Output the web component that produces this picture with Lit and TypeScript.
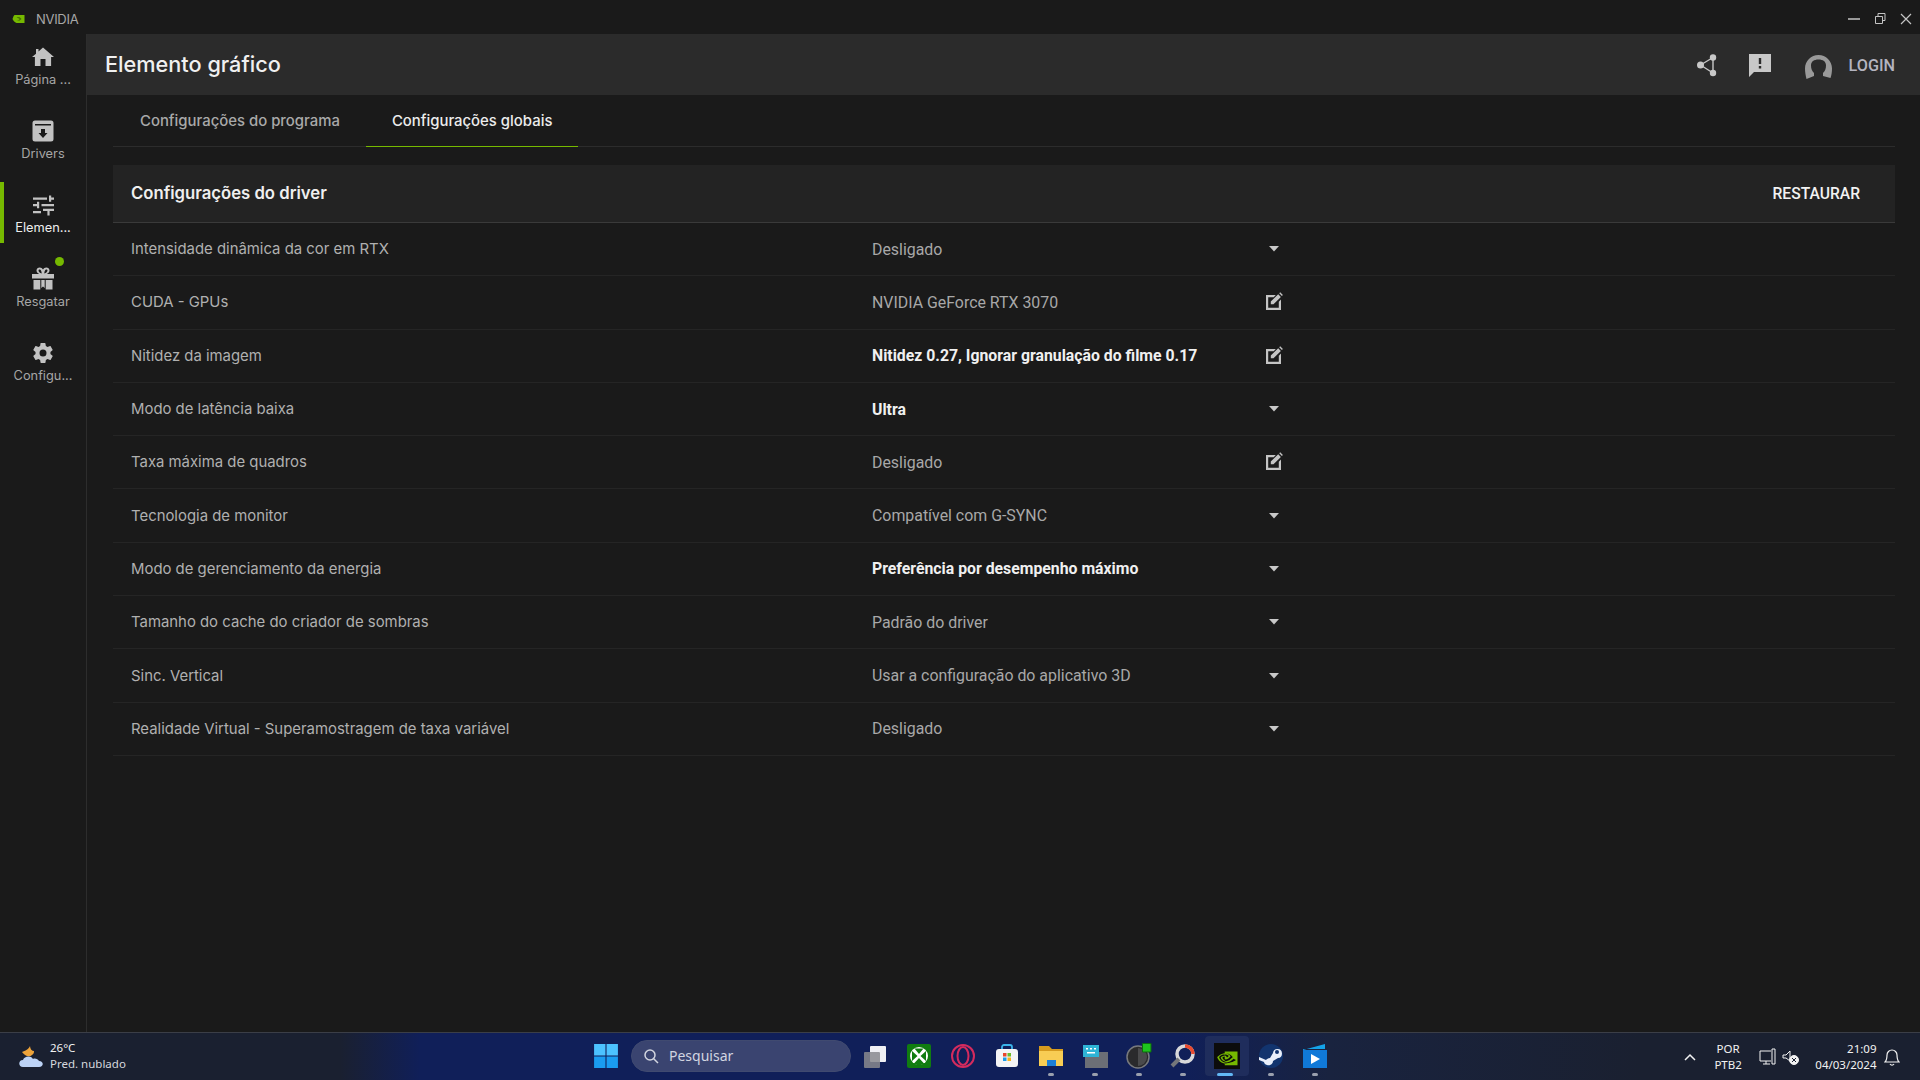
import { LitElement, html, svg, css } from 'lit';
import { customElement } from 'lit/decorators.js';

type Row = { label: string; value: string; strong?: boolean; edit?: boolean };

const ROWS: Row[] = [
  { label: 'Intensidade dinâmica da cor em RTX', value: 'Desligado' },
  { label: 'CUDA - GPUs', value: 'NVIDIA GeForce RTX 3070', edit: true },
  { label: 'Nitidez da imagem', value: 'Nitidez 0.27, Ignorar granulação do filme 0.17', strong: true, edit: true },
  { label: 'Modo de latência baixa', value: 'Ultra', strong: true },
  { label: 'Taxa máxima de quadros', value: 'Desligado', edit: true },
  { label: 'Tecnologia de monitor', value: 'Compatível com G-SYNC' },
  { label: 'Modo de gerenciamento da energia', value: 'Preferência por desempenho máximo', strong: true },
  { label: 'Tamanho do cache do criador de sombras', value: 'Padrão do driver' },
  { label: 'Sinc. Vertical', value: 'Usar a configuração do aplicativo 3D' },
  { label: 'Realidade Virtual - Superamostragem de taxa variável', value: 'Desligado' },
];

const ICONS = {
  home: svg`<path d="M9.500 21v-7h5v7h5.600v-9H23L12 2.500 7.500 6.500V4H5v4.700L1 12h2.900v9z"/>`,
  drivers: svg`<path fill-rule="evenodd" d="M4 1.500h16a2.500 2.500 0 0 1 2.500 2.500v16a2.500 2.500 0 0 1-2.500 2.500H4A2.500 2.500 0 0 1 1.500 20V4A2.500 2.500 0 0 1 4 1.500zM4 5v1.500h16V5zM10 10v4H7.500l4.500 5 4.500-5H14v-4z"/>`,
  tune: svg`<path d="M2 4.500h14v2.200H2zM18 2.500h2.200v2h2.800v2.200h-2.800v2H18zM2 11h4v-2.200h2.200v6.400H6V13.200H2zM10.500 11H23v2.200H10.500zM2 18h8v2.200H2zM12 15.800h11V18h-4.400v4.500h-2.200V18H12z"/>`,
  gift: svg`<path fill-rule="evenodd" d="M1 7h7.200C6.500 6.300 5.500 5 5.500 3.600 5.500 1.800 7 .5 8.700.5c1.400 0 2.600.8 3.300 2 .7-1.200 1.900-2 3.300-2 1.700 0 3.200 1.300 3.200 3.100 0 1.400-1 2.700-2.700 3.400H23v4.500H1zM8.700 2.500c-.7 0-1.200.5-1.200 1.100 0 .9 1.200 2.600 3.200 3 0-2-.9-4.100-2-4.100zm6.600 0c-1.100 0-2 2.100-2 4.100 2-.4 3.200-2.100 3.200-3 0-.6-.5-1.100-1.200-1.100zM2.500 13h6.800v9.500H2.500zM14.700 13h6.800v9.500h-6.800zM10.300 13h3.400v8l-1.700-1.500-1.700 1.500z"/>`,
  gear: svg`<path d="M19.400 13c.04-.33.1-.66.1-1s-.05-.67-.1-1l2.100-1.650c.2-.15.24-.42.12-.64l-2-3.460c-.12-.22-.39-.3-.61-.22l-2.490 1c-.52-.4-1.080-.73-1.690-.98l-.38-2.650A.49.49 0 0 0 14 2h-4c-.25 0-.46.18-.49.42l-.38 2.650c-.61.25-1.170.59-1.690.98l-2.490-1c-.23-.09-.49 0-.61.22l-2 3.460c-.13.220-.07.490.12.640L4.570 11c-.04.33-.07.66-.07 1s.03.67.07 1l-2.110 1.650c-.19.15-.25.42-.12.640l2 3.460c.12.220.39.300.61.220l2.490-1c.52.400 1.080.730 1.690.980l.38 2.650c.03.240.24.420.49.420h4c.25 0 .46-.18.49-.42l.38-2.650c.61-.25 1.170-.59 1.690-.98l2.490 1c.23.090.49 0 .61-.22l2-3.460c.12-.22.070-.49-.12-.64zM12 15.500a3.500 3.500 0 1 1 0-7 3.500 3.500 0 0 1 0 7z"/>`,
};

const NAV = [
  { label: 'Página ...', icon: ICONS.home },
  { label: 'Drivers', icon: ICONS.drivers },
  { label: 'Elemen...', icon: ICONS.tune, active: true },
  { label: 'Resgatar', icon: ICONS.gift, dot: true },
  { label: 'Configu...', icon: ICONS.gear },
];

const nvidiaEye = svg`<path d="M9.200 8.900V7.400h.45c4.100-.13 6.800 3.500 6.800 3.500s-2.900 4-6 4c-.45 0-.85-.07-1.250-.2V10c1.600.2 1.900.9 2.900 2.500l2.100-1.800s-1.500-2-4.100-2c-.3 0-.55.020-.9.200zm0-3.700v2.200h.45c5.700-.2 9.400 4.600 9.400 4.600s-4.300 5.200-8.700 5.200c-.4 0-.77-.04-1.150-.1v1.400c.3.040.64.060.96.060 4.100 0 7.100-2.100 10-4.600.48.380 2.450 1.300 2.850 1.700-2.730 2.300-9.100 4.100-12.700 4.100-.36 0-.7-.02-1.060-.06V22h15.700V5.200zm0 10.700v1.200c-3.900-.7-5-4.700-5-4.700s1.900-2.100 5-2.400v1.300c-1.600-.2-2.900 1.300-2.900 1.300s.7 2.600 2.900 3.400zM2.300 12.300s2.300-3.400 6.900-3.700V7.400C4.100 7.800 0 12.100 0 12.100s2.300 7.100 9.200 7.700v-1.300c-5-.6-6.900-6.200-6.900-6.200z"/>`;

const editIcon = html`<svg class="edit" viewBox="0 0 18 18"><path d="M1 3h9.800L8.700 5.200H3.200v10.600h10.600V9.800L16 7.600V18H1z"/><path d="M5.800 9.600 13.200 2.200l2.700 2.700-7.400 7.400H5.800zM14.200 1.200 15.200.2l2.700 2.700-1 1z"/></svg>`;

const caret = html`<svg class="caret" viewBox="0 0 10 6"><path d="M0 0h10L5 5.500z"/></svg>`;

@customElement('app-root')
export class AppRoot extends LitElement {
  static styles = css`
    :host {
      display: flex;
      flex-direction: column;
      width: 1920px;
      height: 1080px;
      overflow: hidden;
      background: #1a1a1a;
      font-family: Inter, 'Noto Sans', sans-serif;
      color: #b4b4b4;
    }
    svg { display: block; }
    svg:not([fill]) { fill: currentColor; }
    .titlebar {
      height: 34px;
      flex: none;
      box-sizing: border-box;
      padding: 3px 0 0 12px;
      display: flex;
      align-items: center;
      font-size: 13px;
      letter-spacing: -0.3px;
      color: #a8a8a8;
    }
    .titlebar .logo { width: 13px; height: 8px; margin-right: 11px; }
    .winbtns { margin-left: auto; margin-right: 1px; display: flex; color: #c4c4c4; }
    .winbtns svg { width: 26px; height: 14px; }
    .body { flex: 1; display: flex; min-height: 0; }
    nav {
      width: 86px;
      flex: none;
      border-right: 1px solid #2d2d2d;
      display: flex;
      flex-direction: column;
      gap: 13px;
    }
    .nav-item {
      position: relative;
      height: 61px;
      display: flex;
      flex-direction: column;
      align-items: center;
      padding-top: 11px;
      box-sizing: border-box;
      font-size: 12.800px;
      color: #a6a6a6;
    }
    .nav-item svg { width: 24px; height: 24px; margin-bottom: 2.500px; color: #c2c2c2; }
    .nav-item.active { color: #eeeeee; }
    .nav-item.active::before {
      content: '';
      position: absolute;
      left: 0;
      top: 0;
      bottom: 0;
      width: 4px;
      background: #76b900;
    }
    .dot {
      position: absolute;
      left: 55px;
      top: 1px;
      width: 9px;
      height: 9px;
      border-radius: 50%;
      background: #76b900;
    }
    main { flex: 1; display: flex; flex-direction: column; min-width: 0; }
    header {
      height: 61px;
      flex: none;
      background: #2b2b2b;
      display: flex;
      align-items: center;
      padding: 0 25px 0 18px;
    }
    h1 { margin: -2px 0 0; font-size: 21.700px; font-weight: 500; color: #f0f0f0; }
    .actions { margin-left: auto; display: flex; align-items: center; color: #c8c8c8; }
    .share { width: 22px; height: 24px; margin-right: 30px; }
    .feedback { width: 24px; height: 24px; margin-right: 33px; }
    .avatar { width: 27px; height: 24px; margin-right: 17px; margin-top: 4px; }
    .login { font: 500 16.200px Roboto, sans-serif; color: #b4b4c0; padding-top: 2px; }
    .content { padding: 0 25px 0 26px; }
    .tabs {
      height: 51px;
      display: flex;
      padding-left: 1px;
      border-bottom: 1px solid #2c2c2c;
      font-size: 14.900px;
      font-weight: 500;
      color: #a9a9a9;
    }
    .tab { padding: 0 26px; display: flex; align-items: center; box-sizing: border-box; }
    .tab.active { color: #ececec; border-bottom: 1px solid #76b900; margin-bottom: -1px; }
    .section {
      margin-top: 18px;
      height: 58px;
      box-sizing: border-box;
      background: #232323;
      border-bottom: 1px solid #3a3a3a;
      display: flex;
      align-items: center;
      justify-content: space-between;
      padding: 0 35px 2px 18px;
      font-size: 16.700px;
      font-weight: 600;
      color: #efefef;
    }
    .restore { font: 500 15.650px Roboto, sans-serif; color: #f2f2f2; padding-top: 1px; }
    .row {
      height: 53.300px;
      box-sizing: border-box;
      border-bottom: 1px solid #252525;
      display: flex;
      align-items: center;
      padding-left: 18px;
      font-size: 14.900px;
      color: #b0b0b0;
    }
    .label { width: 741px; flex: none; }
    .value { width: 393px; flex: none; font: 400 15.900px Roboto, sans-serif; color: #a8a8a8; }
    .value.strong { font-weight: 700; font-size: 15.800px; color: #f0f0f0; }
    .caret { width: 10px; height: 6px; margin-left: 4px; color: #c8c8c8; }
    .edit { width: 18px; height: 18px; margin-top: -2px; color: #c4c4c4; }
    .taskbar {
      height: 48px;
      flex: none;
      box-sizing: border-box;
      border-top: 1px solid #3b3e47;
      background: linear-gradient(90deg, #1a2030 0, #1a2030 340px, #101f59 420px, #101f59 1180px, #19233f 1330px, #1a2030 1640px, #1a2030 100%);
      display: grid;
      grid-template-columns: 1fr auto 1fr;
      align-items: center;
      color: #f2f2f2;
      font-family: 'Noto Sans', sans-serif;
    }
    .weather { display: flex; align-items: center; padding-left: 18px; }
    .weather svg { width: 26px; height: 26px; margin-right: 6px; }
    .weather div { font-size: 11.500px; line-height: 16px; margin-top: -2px; }
    .weather small { display: block; font-size: 11.500px; color: #d6d8de; }
    .center { display: flex; align-items: center; margin-top: -2px; }
    .tb {
      position: relative;
      width: 44px;
      height: 40px;
      display: flex;
      align-items: center;
      justify-content: center;
      border-radius: 4px;
      box-sizing: border-box;
    }
    .tb svg { width: 26px; height: 26px; }
    .tb.start { padding-left: 2px; }
    .tb.open::after {
      content: '';
      position: absolute;
      bottom: 0;
      left: 19px;
      width: 6px;
      height: 3px;
      border-radius: 2px;
      background: #9aa0ae;
    }
    .tb.current { background: #1f2d5c; }
    .tb.current::after { left: 12px; width: 16px; background: #62b8f5; }
    .search {
      width: 220px;
      height: 32px;
      margin: 0 2px 0 4px;
      box-sizing: border-box;
      border-radius: 16px;
      border: 1px solid #404a70;
      background: #3a4470;
      display: flex;
      align-items: center;
      padding-left: 11px;
      font-size: 14px;
      color: #d2d5e0;
    }
    .search svg { width: 16px; height: 16px; margin-right: 10px; }
    .tray { display: flex; align-items: center; justify-content: flex-end; font-size: 11.500px; line-height: 16px; }
    .chev { width: 14px; height: 14px; margin-right: 17px; }
    .lang { text-align: center; margin-right: 17px; }
    .tray-ic { width: 18px; height: 18px; margin-right: 5px; }
    .clock { text-align: right; margin: 0 7.500px 0 10.500px; }
    .bell { width: 16px; height: 18px; margin-right: 20px; }
  `;

  render() {
    return html`
      <div class="titlebar">
        <svg class="logo" viewBox="0 0 24 16"><path fill="#76b900" d="M4 0h20v16H8C4 14 1 11 0 8c1-3 2-6 4-8z"/><path fill="#4b7500" d="M8 5c4-2 7-1 10 3-3 4-7 4-10 3 3 0 5-1 6-3-2-2-4-3-6-3z"/></svg>
        NVIDIA
        <div class="winbtns">
          <svg viewBox="0 0 26 14" fill="none"><path d="M7 7h12" stroke="currentColor" stroke-width="1.500"/></svg>
          <svg viewBox="0 0 26 14" fill="none" stroke="currentColor"><path d="M8.500 4.500h7v7h-7zM11 4V1.500h7v7h-2.500"/></svg>
          <svg viewBox="0 0 26 14" fill="none" stroke="currentColor" stroke-width="1.200"><path d="M8 2l10 10M18 2 8 12"/></svg>
        </div>
      </div>
      <div class="body">
        <nav>
          ${NAV.map(
            n => html`<div class="nav-item ${n.active ? 'active' : ''}">
              ${n.dot ? html`<span class="dot"></span>` : ''}
              <svg viewBox="0 0 24 24">${n.icon}</svg>
              ${n.label}
            </div>`
          )}
        </nav>
        <main>
          <header>
            <h1>Elemento gráfico</h1>
            <div class="actions">
              <svg class="share" viewBox="0 0 22 24"><circle cx="4.500" cy="12" r="3.500"/><circle cx="17" cy="4.500" r="3.200"/><circle cx="17" cy="20" r="3.200"/><path d="M4.500 12 17 4.500M4.500 12 17 20M17 4.500V20" stroke="currentColor" stroke-width="1.400"/></svg>
              <svg class="feedback" viewBox="0 0 24 24"><path fill-rule="evenodd" d="M1 1h22v18H6l-5 5zM10.800 5v6h2.400V5zM10.800 13v2.400h2.400V13z"/></svg>
              <svg class="avatar" viewBox="0 0 27 24"><path fill="#9a9a9a" d="M13.500 0C21 0 27 6 27 13.500c0 3.500-.5 6.500-1.500 9.500L18 21v-3c2-1.800 3-4.500 3-7.500C21 6.500 18 4.500 13.500 4.500S6 6.500 6 10.500c0 3 1 5.700 3 7.500v3l-7.500 3C.5 20 0 17 0 13.500 0 6 6 0 13.500 0z"/></svg>
              <span class="login">LOGIN</span>
            </div>
          </header>
          <div class="content">
            <div class="tabs">
              <div class="tab">Configurações do programa</div>
              <div class="tab active">Configurações globais</div>
            </div>
            <div class="section">
              <span>Configurações do driver</span>
              <span class="restore">RESTAURAR</span>
            </div>
            ${ROWS.map(
              r => html`<div class="row">
                <span class="label">${r.label}</span>
                <span class="value ${r.strong ? 'strong' : ''}">${r.value}</span>
                ${r.edit ? editIcon : caret}
              </div>`
            )}
          </div>
        </main>
      </div>
      <footer class="taskbar">
        <div class="weather">
          <svg viewBox="0 0 26 26"><path fill="#eda33a" d="M12 2c-1 3-5 5-8 6 2 3 7 6 10 3 2-1 2-3 2-4-2 0-4-2-4-5z"/><path fill="#bcd2f5" d="M5 23c-5 0-5-7 0-7 1-4 8-5 10-1 2-1 5 0 6 2 5 0 5 6 0 6z"/></svg>
          <div>26°C<small>Pred. nublado</small></div>
        </div>
        <div class="center">
          <div class="tb start"><svg viewBox="0 0 24 24"><path fill="#4cc2ff" d="M1 1h10.500v10.500H1zM12.500 1H23v10.500H12.500z"/><path fill="#1a9cf0" d="M1 12.500h10.500V23H1zM12.500 12.500H23V23H12.500z"/></svg></div>
          <div class="search">
            <svg viewBox="0 0 16 16" fill="none" stroke="currentColor" stroke-width="1.500"><circle cx="7" cy="7" r="5"/><path d="M10.500 10.500 15 15"/></svg>
            Pesquisar
          </div>
          <div class="tb"><svg viewBox="0 0 26 26"><rect x="8" y="3" width="16" height="16" rx="1" fill="#f0f0f4"/><rect x="2" y="9" width="16" height="16" rx="1" fill="#8a8a8e" opacity=".85"/></svg></div>
          <div class="tb"><svg viewBox="0 0 26 26"><rect x="1" y="1" width="24" height="24" rx="2" fill="#107c10"/><circle cx="13" cy="13" r="9" fill="#fff"/><path fill="#107c10" d="M13 11 8.500 5.500h9zM11.500 13 6 8v10zM14.500 13 20 8v10zM13 15l-5.500 6c3 1.500 8 1.500 11 0z"/></svg></div>
          <div class="tb"><svg viewBox="0 0 26 26" fill="none" stroke="#d42b5e" stroke-width="2"><circle cx="13" cy="13" r="11"/><ellipse cx="13" cy="13" rx="5.500" ry="9"/></svg></div>
          <div class="tb"><svg viewBox="0 0 26 26"><path d="M8 6V4a2 2 0 0 1 2-2h6a2 2 0 0 1 2 2v2" fill="none" stroke="#3bb4ea" stroke-width="1.800"/><rect x="2" y="6" width="22" height="18" rx="3" fill="#f4f4f6"/><path fill="#e8452c" d="M9 10h3.500v3.500H9z"/><path fill="#6cbb2a" d="M13.500 10H17v3.500h-3.500z"/><path fill="#1c9be6" d="M9 14.500h3.500V18H9z"/><path fill="#f7b21a" d="M13.500 14.500H17V18h-3.500z"/></svg></div>
          <div class="tb open"><svg viewBox="0 0 26 26"><path fill="#d69b1e" d="M1 3h10l3 3h11v6H1z"/><path fill="#f8cd54" d="M1 8h24v15H1z"/><path fill="#1d7fd6" d="M9 17h9v6H9z"/></svg></div>
          <div class="tb open"><svg viewBox="0 0 26 26"><path fill="#6c6f76" d="M3 9h23v16H3z"/><path fill="#2fb4d6" d="M1 2h16v12H1z"/><path fill="#fff" d="M4 5h2v1.500H4zM8 5h2v1.500H8zM12 5h2v1.500h-2zM5 9h8v1.500H5z"/></svg></div>
          <div class="tb open"><svg viewBox="0 0 26 26"><circle cx="12" cy="14" r="11" fill="#2a2a2c" stroke="#77797e" stroke-width="1.500"/><path fill="#4a4a4c" d="M12 5a9 9 0 0 1 0 18z"/><path fill="#1ec41e" stroke="#0c6e0c" d="M16.500 .5h8.500v8.500h-8.500z"/></svg></div>
          <div class="tb open"><svg viewBox="0 0 26 26"><circle cx="15" cy="11" r="8" fill="none" stroke="#d8d8da" stroke-width="3.500"/><path d="M15 3a8 8 0 0 1 8 8" fill="none" stroke="#e84a2f" stroke-width="3.500"/><path d="M9 16 2 23" stroke="#74767a" stroke-width="4"/></svg></div>
          <div class="tb open current"><svg viewBox="0 0 24 24"><rect width="24" height="24" fill="#0c0c0c"/><g transform="translate(3 4) scale(.75)" fill="#76b900">${nvidiaEye}</g></svg></div>
          <div class="tb open"><svg viewBox="0 0 26 26"><circle cx="13" cy="13" r="12" fill="#12346e"/><path fill="#e8eefa" d="M1 14l7 3c1-1 2-2 4-2l3-5a4.500 4.500 0 1 1 5 5l-5 3c0 3-3 5-6 4-2-.5-3-2-3-3l-5-2z"/><circle cx="19" cy="9" r="2" fill="#12346e"/></svg></div>
          <div class="tb open"><svg viewBox="0 0 26 26"><path fill="#14a3e8" d="M1 7 23 1v5H1z"/><path fill="#1079d8" d="M1 7h24v18H1z"/><path fill="#fff" d="M9 11l9 5-9 5z"/></svg></div>
        </div>
        <div class="tray">
          <svg class="chev" viewBox="0 0 14 14" fill="none" stroke="currentColor" stroke-width="1.500"><path d="M2 10l5-5 5 5"/></svg>
          <div class="lang">POR<br />PTB2</div>
          <svg class="tray-ic" viewBox="0 0 18 18" fill="none" stroke="currentColor"><path d="M12 3H1v10h11M4 16h7M7 13v3M13 1h3v15h-3z"/></svg>
          <svg class="tray-ic" viewBox="0 0 18 18" fill="none" stroke="currentColor"><path d="M1 7h3l4-4v10L4 10H1z"/><circle cx="12" cy="12" r="4.500" fill="currentColor"/><path d="M10 10l4 4M14 10l-4 4" stroke="#1a2030"/></svg>
          <div class="clock">21:09<br />04/03/2024</div>
          <svg class="bell" viewBox="0 0 16 18" fill="none" stroke="currentColor" stroke-width="1.200"><path d="M1 14c2-2 2-4 2-7a5 5 0 0 1 10 0c0 3 0 5 2 7zM6 16c1 1.500 3 1.500 4 0"/></svg>
        </div>
      </footer>
    `;
  }
}
